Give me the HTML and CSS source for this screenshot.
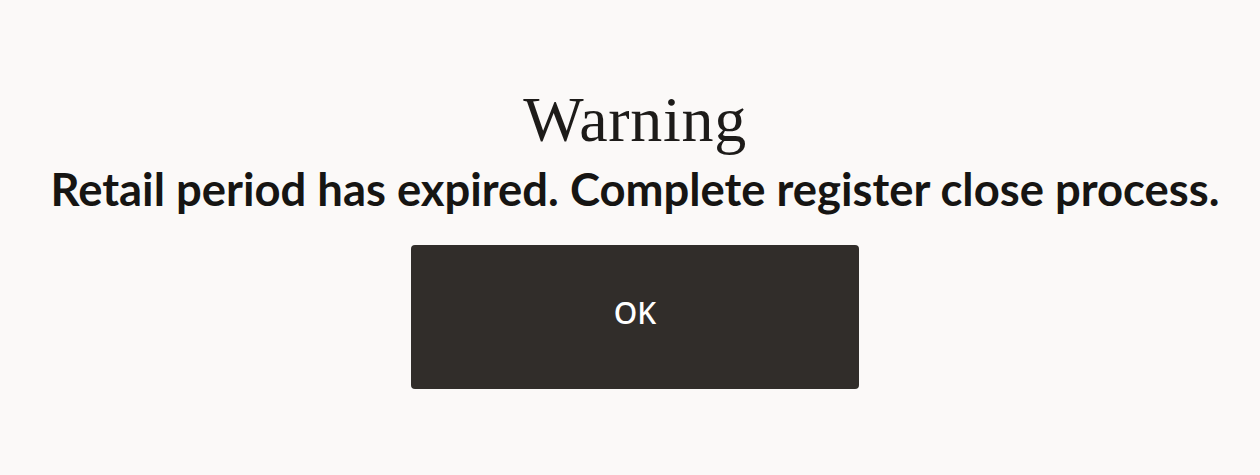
FILE: index.html
```html
<!DOCTYPE html>
<html>
<head>
<meta charset="utf-8">
<link rel="stylesheet" href="styles.css">
</head>
<body>
<main class="dialog">
  <h1 class="title">Warning</h1>
  <p class="message">Retail period has expired. Complete register close process.</p>
  <button class="ok-btn" type="button">OK</button>
</main>
</body>
</html>
```

FILE: styles.css
```css
html, body {
  margin: 0;
  padding: 0;
  background: #fbf9f8;
  height: 100%;
}
.dialog {
  display: flex;
  flex-direction: column;
  align-items: center;
  padding-top: 88px;
  padding-left: 10px;
}
.title {
  margin: 0;
  font-family: "Liberation Serif", serif;
  font-weight: 400;
  font-size: 64px;
  line-height: 64px;
  letter-spacing: 0.7px;
  color: #1d1b19;
}
.message {
  margin: 10px 0 0;
  font-family: Lato, "Noto Sans", sans-serif;
  font-weight: 700;
  font-size: 45.4px;
  line-height: 54px;
  color: #161513;
  white-space: nowrap;
}
.ok-btn {
  margin-top: 29px;
  width: 448px;
  height: 144px;
  padding: 0 0 9px;
  border: none;
  border-radius: 4px;
  background: #312d2a;
  color: #ffffff;
  font-family: "Noto Sans", sans-serif;
  font-weight: 500;
  font-size: 30px;
  line-height: 36px;
  cursor: pointer;
}
```
